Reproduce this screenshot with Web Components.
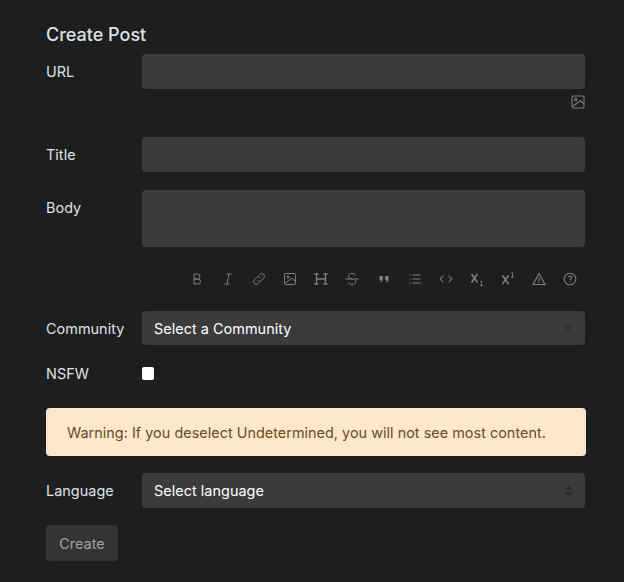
<!DOCTYPE html>
<html><head><meta charset="utf-8"><style>
html,body{margin:0;background:#1e1e1e}
body{font-family:Inter,"Liberation Sans",sans-serif;color:#dee2e6;width:624px;height:582px;overflow:hidden}
</style></head><body>
<post-form>
<h-title>Create Post</h-title>
<form-row label="URL" style="--rt:0px"><text-box h="35"></text-box></form-row>
<img-hint></img-hint>
<form-row label="Title" style="--rt:30px"><text-box h="35"></text-box></form-row>
<form-row label="Body" style="--rt:18px"><text-box h="57"></text-box></form-row>
<md-toolbar></md-toolbar>
<form-row label="Community" style="--rt:24px"><select-box h="34" text="Select a Community" arrow="down"></select-box></form-row>
<form-row label="NSFW" style="--rt:12px;--lp:7px"><check-box></check-box></form-row>
<warn-box>Warning: If you deselect Undetermined, you will not see most content.</warn-box>
<form-row label="Language" style="--rt:17px"><select-box h="35" text="Select language" arrow="updown"></select-box></form-row>
<create-btn>Create</create-btn>
</post-form>
<script>
function def(name,html){customElements.define(name,class extends HTMLElement{connectedCallback(){if(this.shadowRoot)return;const r=this.attachShadow({mode:'open'});r.innerHTML=typeof html==='function'?html(this):html;}});}
def('post-form',`<style>:host{display:block;padding:24px 38px 0 46px;width:540px}</style><slot></slot>`);
def('h-title',`<style>:host{display:block;font-size:18px;font-weight:500;line-height:21px;height:30px;color:#dee2e6}</style><slot></slot>`);
def('form-row',el=>`<style>:host{display:grid;grid-template-columns:96px 1fr;margin-top:var(--rt,0)}
.l{font-size:14.4px;line-height:20px;padding-top:var(--lp,8px);color:#dee2e6;letter-spacing:.05px}
.c{width:443px;display:flex;align-items:center;align-self:start;min-height:34px}</style><div class="l">${el.getAttribute('label')}</div><div class="c"><slot></slot></div>`);
def('text-box',el=>`<style>:host{display:block;width:443px;height:${el.getAttribute('h')}px;background:#3b3b3b;border-radius:4px}</style>`);
def('img-hint',`<style>:host{display:flex;justify-content:flex-end;height:12px;margin-top:6px;padding-right:1px;width:539px;align-items:flex-start}svg{display:block}</style>
<svg width="14" height="14" viewBox="0 0 14 14" fill="none" stroke="#7f7f7f" stroke-width="1.1"><rect x="1" y="1" width="12" height="12" rx="1.5"/><circle cx="4.6" cy="4.6" r="1.2"/><path d="M1.5 11.5 9.500 5.500 12.800 8.800"/></svg>`);
const ic={
B:'<path d="M5 3h3.500a2.500 2.500 0 0 1 0 5H5zM5 8h4a2.500 2.500 0 0 1 0 5H5z"/>',
I:'<path d="M6.500 3h5M4.500 13h5M9 3 7 13"/>',
L:'<path d="M6.600 9.400a2.600 2.600 0 0 0 3.800.1l2.400-2.400a2.700 2.700 0 0 0-3.800-3.800L7.800 4.500"/><path d="M9.400 6.600a2.600 2.600 0 0 0-3.800-.1L3.200 8.900a2.700 2.700 0 0 0 3.800 3.800l1.200-1.200"/>',
P:'<rect x="2.500" y="2.500" width="11" height="11" rx="1"/><circle cx="6" cy="6" r="1.100"/><path d="M3 12.500 10 7l3 3"/>',
H:'<path stroke-width="1.300" d="M3.500 3v10M12.500 3v10M1.500 3h4M1.500 13h4M10.500 3h4M10.500 13h4M3.500 8h9"/>',
S:'<path d="M11.500 4.500C11 3.200 9.500 2.500 8 2.500c-2 0-3.500 1-3.500 2.700 0 1.300 1 2.100 3.500 2.800M4.300 11.300c.5 1.400 2 2.200 3.700 2.200 2 0 3.700-1 3.700-2.800 0-.7-.2-1.200-.6-1.700M1.500 8h13"/>',
Q:'<path fill="#7f7f7f" stroke="none" d="M3.500 5h3.300v3.300c0 1.700-.9 2.700-2.400 3l-.4-.9c.8-.3 1.200-.8 1.200-1.400H3.500zM9.200 5h3.300v3.300c0 1.700-.9 2.700-2.400 3l-.4-.9c.8-.3 1.200-.8 1.200-1.400H9.200z"/>',
U:'<path d="M5.500 4h8M5.500 8h8M5.500 12h8"/><path stroke-dasharray="1.200 2.800" d="M3 3.400v10"/>',
C:'<path stroke-width="1.100" d="M5.500 4.500 2.300 8l3.200 3.500M10.500 4.500 13.700 8l-3.200 3.500"/>',
SUB:'<path stroke-width="1.600" d="M2.500 3 8.500 11.500M8.500 3 2.500 11.500"/><path stroke-width=".9" d="M11.500 10.500l1-.5V14.500M11 14.500h3"/>',
SUP:'<path stroke-width="1.600" d="M2.500 4.500 8.500 13M8.500 4.500 2.500 13"/><path stroke-width=".9" d="M11.500 2l1-.5V6M11 6h3"/>',
W:'<path stroke-width="1.100" d="M8 2.500 14 13.500H2zM8 6.500v3.500M8 11v1"/>',
Q2:'<circle cx="8" cy="8" r="5.800" stroke-width="1.100"/><path stroke-width="1.100" d="M6.300 6.400A1.800 1.800 0 0 1 8 5.100c1 0 1.800.7 1.800 1.500 0 1.300-1.800 1.300-1.800 2.600M8 10.200v1"/>'
};
def('md-toolbar',`<style>:host{display:flex;height:16px;margin-top:24px;margin-left:143px;gap:15.1px;align-items:center}svg{display:block;flex:none}</style>`+
['B','I','L','P','H','S','Q','U','C','SUB','SUP','W','Q2'].map(k=>`<svg width="16" height="16" viewBox="0 0 16 16" fill="none" stroke="#7f7f7f" stroke-width="1">${ic[k]}</svg>`).join(''));
def('select-box',el=>{const down=el.getAttribute('arrow')==='down';return `<style>:host{display:flex;align-items:center;justify-content:space-between;width:443px;box-sizing:border-box;height:${el.getAttribute('h')}px;background:#3b3b3b;border-radius:4px;padding:0 12px;font-size:14.4px;color:#fff;letter-spacing:.05px}svg{display:block}</style><span>${el.getAttribute('text')}</span>`+
(down?`<svg width="10" height="6" viewBox="0 0 10 6"><path d="M0 0h10L5 6z" fill="#2f2f2f"/></svg>`:`<svg width="8" height="12" viewBox="0 0 8 12"><path d="M0 5 4 0l4 5zM0 7l4 5 4-5z" fill="#2a2a2a"/></svg>`)});
def('check-box',`<style>:host{display:block;width:12px;height:13px;background:#fff;border-radius:2px;margin:-2px 0 0 0}</style>`);
def('warn-box',`<style>:host{display:block;box-sizing:border-box;width:540px;height:48px;margin-top:17px;background:#fde8cc;border-radius:4px;padding:0 21px;line-height:50px;font-size:14.4px;color:#6b4a1e;letter-spacing:.03px}</style><slot></slot>`);
def('create-btn',`<style>:host{display:flex;align-items:center;justify-content:center;width:72px;height:36px;margin-top:17px;background:#333;border-radius:4px;font-size:14.4px;color:#a0a0a0}</style><slot></slot>`);
</script>
</body></html>
